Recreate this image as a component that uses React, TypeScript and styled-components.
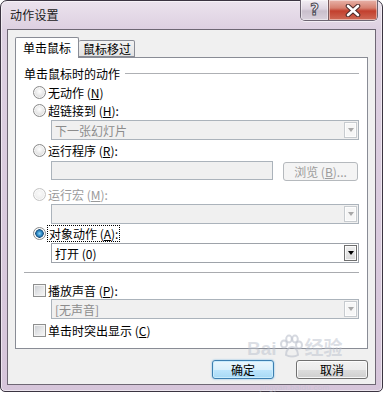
import styled, { createGlobalStyle } from "styled-components";

const GlobalStyle = createGlobalStyle`
  html, body {
    margin: 0;
    padding: 0;
    background: #ffffff;
  }
  body {
    font-family: "Noto Sans CJK SC", "Noto Sans", "DejaVu Sans", sans-serif;
    font-size: 12px;
    color: #000;
  }
`;

const Frame = styled.div`
  position: relative;
  box-sizing: border-box;
  width: 383px;
  height: 392px;
  display: flex;
  flex-direction: column;
  border: 1px solid #3b3441;
  border-radius: 7px 7px 5px 5px;
  background: linear-gradient(to bottom, #ebe3ed 0px, #ddd0e1 28px, #d6c5da 100%);
  box-shadow: inset 0 0 0 1px rgba(255, 255, 255, 0.55);
`;

const TitleBar = styled.div`
  height: 28px;
  display: flex;
  align-items: flex-start;
  justify-content: space-between;
  padding-left: 9px;
  flex-shrink: 0;
`;

const Caption = styled.span`
  line-height: 28px;
  color: #1a1a1a;
  letter-spacing: 0.2px;
`;

const CaptionButtons = styled.div`
  display: flex;
  margin-top: -1px;
  margin-right: 4px;
  border: 1px solid #6d6572;
  border-top: none;
  border-radius: 0 0 5px 5px;
  overflow: hidden;
  box-shadow: 0 1px 0 rgba(255, 255, 255, 0.6);
`;

const CaptionButton = styled.div<{ $close?: boolean }>`
  height: 20px;
  width: ${(p) => (p.$close ? "48px" : "27px")};
  display: flex;
  align-items: center;
  justify-content: center;
  background: ${(p) =>
    p.$close
      ? "linear-gradient(to bottom, #e8b3a9 0%, #d6806f 40%, #c2402e 55%, #cf6a56 100%)"
      : "linear-gradient(to bottom, #f3eef4 0%, #ddd3e0 45%, #c9bfcc 55%, #d9d1dc 100%)"};
  border-left: ${(p) => (p.$close ? "1px solid #7a5a5e" : "none")};
  box-shadow: inset 0 0 0 1px rgba(255, 255, 255, 0.45);
`;

const HelpGlyph = styled.span`
  font-family: "DejaVu Sans", sans-serif;
  font-weight: bold;
  font-size: 15px;
  color: #f4f4f6;
  -webkit-text-stroke: 1px #4d4a55;
  line-height: 1;
`;

const Client = styled.div`
  flex: 1;
  margin: 0 6px 6px;
  border: 1px solid #6e6774;
  background: #f0f0f0;
  padding: 7px 7px 0;
  display: flex;
  flex-direction: column;
`;

const TabStrip = styled.div`
  display: flex;
  align-items: flex-end;
  height: 21px;
  margin-bottom: -1px;
  position: relative;
  z-index: 1;
`;

const Tab = styled.div<{ $active?: boolean }>`
  box-sizing: border-box;
  height: ${(p) => (p.$active ? "21px" : "17px")};
  padding: ${(p) => (p.$active ? "0 7px 0 7px" : "0 3px 0 4px")};
  margin-bottom: ${(p) => (p.$active ? "0" : "1px")};
  border: 1px solid #898c95;
  border-left: ${(p) => (p.$active ? "1px solid #898c95" : "none")};
  border-bottom: ${(p) => (p.$active ? "none" : "1px solid #898c95")};
  border-radius: 2px 2px 0 0;
  background: ${(p) =>
    p.$active ? "#ffffff" : "linear-gradient(to bottom, #f3f3f3, #e2e2e2)"};
  line-height: ${(p) => (p.$active ? "20px" : "15px")};
  white-space: nowrap;
`;

const Panel = styled.div`
  box-sizing: border-box;
  height: 292px;
  border: 1px solid #898c95;
  background: #ffffff;
  padding: 0 8px;
  display: flex;
  flex-direction: column;
`;

const GroupHeader = styled.div`
  display: flex;
  align-items: center;
  gap: 5px;
  height: 16px;
  margin-top: 7px;
  white-space: nowrap;
`;

const GroupLine = styled.div`
  flex: 1;
  height: 1px;
  background: #aeb0b4;
`;

const OptionRow = styled.div<{ $top?: number; $disabled?: boolean }>`
  display: flex;
  align-items: center;
  height: 18px;
  padding-left: 9px;
  margin-top: ${(p) => p.$top ?? 0}px;
  color: ${(p) => (p.$disabled ? "#9a9a9a" : "#000")};
  white-space: nowrap;
`;

const Radio = styled.span<{ $checked?: boolean; $disabled?: boolean }>`
  box-sizing: border-box;
  width: 13px;
  height: 13px;
  margin-right: 2px;
  border-radius: 50%;
  border: 1px solid ${(p) => (p.$disabled ? "#c4c4c4" : "#8a8a8a")};
  background: ${(p) =>
    p.$checked
      ? "radial-gradient(circle at 50% 50%, #8fd3f3 0px, #2c8ac7 2.5px, #1c4f7a 4px, #ffffff 4.6px, #e6e6e6 100%)"
      : p.$disabled
      ? "radial-gradient(circle at 50% 40%, #fafafa 0px, #eeeeee 60%, #e2e2e2 100%)"
      : "radial-gradient(circle at 50% 40%, #ffffff 0px, #e4e4e4 55%, #c8c8c8 100%)"};
  box-shadow: inset 0 0 0 1px rgba(255, 255, 255, 0.7);
  flex-shrink: 0;
`;

const Check = styled.span`
  box-sizing: border-box;
  width: 13px;
  height: 13px;
  margin-right: 2px;
  border: 1px solid #8e8f8f;
  background: linear-gradient(135deg, #c9ccd1 0%, #e6e7e9 55%, #f7f7f7 100%);
  box-shadow: inset 0 0 0 1px #f4f4f4;
  flex-shrink: 0;
`;

const Key = styled.span`
  text-decoration: underline;
`;

const Focused = styled.span`
  outline: 1px dotted #000;
  outline-offset: 0px;
  padding: 0 1px;
  line-height: 15px;
`;

const Indented = styled.div<{ $top?: number }>`
  display: flex;
  gap: 10px;
  margin-left: 27px;
  margin-top: ${(p) => p.$top ?? 0}px;
`;

const Combo = styled.div<{ $enabled?: boolean }>`
  box-sizing: border-box;
  flex: 1;
  height: 20px;
  display: flex;
  align-items: center;
  justify-content: space-between;
  padding: 0 1px 0 3px;
  border: 1px solid ${(p) => (p.$enabled ? "#9ea3aa" : "#abb3bb")};
  background: ${(p) => (p.$enabled ? "#ffffff" : "#f0f0f0")};
  color: ${(p) => (p.$enabled ? "#000" : "#8c8c8c")};
  white-space: nowrap;
`;

const DropButton = styled.span<{ $enabled?: boolean }>`
  box-sizing: border-box;
  width: 13px;
  height: 16px;
  display: flex;
  align-items: center;
  justify-content: center;
  border: 1px solid ${(p) => (p.$enabled ? "#6f6f6f" : "#c7cbcf")};
  background: ${(p) =>
    p.$enabled ? "linear-gradient(to bottom, #f0f0f0, #d9d9d9)" : "#f6f6f6"};
  box-shadow: inset 0 0 0 1px rgba(255, 255, 255, 0.8);
`;

const Arrow = styled.span<{ $enabled?: boolean }>`
  width: 0;
  height: 0;
  border-left: 3.5px solid transparent;
  border-right: 3.5px solid transparent;
  border-top: 4px solid ${(p) => (p.$enabled ? "#000" : "#a8a8a8")};
`;

const TextBox = styled.div`
  box-sizing: border-box;
  width: 222px;
  height: 19px;
  border: 1px solid #abb3bb;
  background: #f0f0f0;
`;

const SmallButton = styled.div`
  box-sizing: border-box;
  width: 75px;
  height: 19px;
  margin-top: 1px;
  border: 1px solid #b5b9bd;
  border-radius: 3px;
  background: #f4f4f4;
  color: #9c9c9c;
  display: flex;
  align-items: center;
  justify-content: center;
  white-space: nowrap;
`;

const Separator = styled.div`
  height: 1px;
  margin-top: 9px;
  background: #a9abaf;
`;

const Footer = styled.div`
  display: flex;
  justify-content: flex-end;
  gap: 22px;
  margin-top: 11px;
`;

const DialogButton = styled.div<{ $default?: boolean; $width: number }>`
  box-sizing: border-box;
  width: ${(p) => p.$width}px;
  height: 19px;
  display: flex;
  align-items: center;
  justify-content: center;
  border-radius: 3px;
  border: 1px solid ${(p) => (p.$default ? "#3c7fb1" : "#707070")};
  background: ${(p) =>
    p.$default
      ? "linear-gradient(to bottom, #eaf6fd 0%, #d9f0fc 50%, #bee6fd 51%, #a7d9f5 100%)"
      : "linear-gradient(to bottom, #f2f2f2 0%, #ebebeb 50%, #dddddd 51%, #cfcfcf 100%)"};
  box-shadow: ${(p) =>
    p.$default
      ? "inset 0 0 0 1px #c9ecfd, 0 0 2px #6fb3e0"
      : "inset 0 0 0 1px rgba(255,255,255,0.8)"};
`;

/* faint "Bai 经验" watermark stamped over the bottom of the screenshot */
const Watermark = styled.div`
  position: absolute;
  left: 246px;
  top: 333px;
  display: flex;
  flex-direction: column;
  align-items: center;
  color: rgba(186, 192, 204, 0.5);
  pointer-events: none;
  font-family: "Liberation Sans", sans-serif;
`;

const WatermarkLine = styled.div`
  display: flex;
  align-items: flex-end;
  gap: 1px;
  font-size: 19px;
  font-weight: bold;
  line-height: 22px;
  font-family: "Liberation Sans", "Noto Sans CJK SC", sans-serif;
`;

const WatermarkSmall = styled.div`
  font-size: 8px;
  line-height: 9px;
  margin-top: 23px;
  letter-spacing: 0.3px;
`;

const CloseIcon = () => (
  <svg width="16" height="13" viewBox="0 0 16 13">
    <path
      d="M3 2 L13 11 M13 2 L3 11"
      stroke="#4a2a2a"
      strokeWidth="4.6"
      strokeLinecap="round"
      fill="none"
    />
    <path
      d="M3 2 L13 11 M13 2 L3 11"
      stroke="#ffffff"
      strokeWidth="2.6"
      strokeLinecap="round"
      fill="none"
    />
  </svg>
);

const Paw = () => (
  <svg width="26" height="26" viewBox="0 0 26 26">
    <g fill="none" stroke="rgba(186,192,204,0.6)" strokeWidth="2">
      <ellipse cx="6" cy="10" rx="3" ry="3.5" />
      <ellipse cx="11" cy="5" rx="2.8" ry="3.4" />
      <ellipse cx="17" cy="5" rx="2.8" ry="3.4" />
      <ellipse cx="21" cy="11" rx="3" ry="3.5" />
      <path d="M8 21 C8 15 12 13 14 13 C17 13 20 16 20 21 C17 23 11 23 8 21 Z" />
    </g>
  </svg>
);

const App = () => {
  return (
    <>
      <GlobalStyle />
      <Frame>
        <TitleBar>
          <Caption>动作设置</Caption>
          <CaptionButtons>
            <CaptionButton>
              <HelpGlyph>?</HelpGlyph>
            </CaptionButton>
            <CaptionButton $close>
              <CloseIcon />
            </CaptionButton>
          </CaptionButtons>
        </TitleBar>
        <Client>
          <TabStrip>
            <Tab $active>单击鼠标</Tab>
            <Tab>鼠标移过</Tab>
          </TabStrip>
          <Panel>
            <GroupHeader>
              单击鼠标时的动作
              <GroupLine />
            </GroupHeader>

            <OptionRow $top={2}>
              <Radio />
              无动作 (<Key>N</Key>)
            </OptionRow>
            <OptionRow>
              <Radio />
              超链接到 (<Key>H</Key>):
            </OptionRow>
            <Indented $top={1}>
              <Combo>
                下一张幻灯片
                <DropButton>
                  <Arrow />
                </DropButton>
              </Combo>
            </Indented>

            <OptionRow $top={1}>
              <Radio />
              运行程序 (<Key>R</Key>):
            </OptionRow>
            <Indented $top={2}>
              <TextBox />
              <SmallButton>
                浏览 (<Key>B</Key>)...
              </SmallButton>
            </Indented>

            <OptionRow $top={4} $disabled>
              <Radio $disabled />
              运行宏 (<Key>M</Key>):
            </OptionRow>
            <Indented $top={1}>
              <Combo>
                <span />
                <DropButton>
                  <Arrow />
                </DropButton>
              </Combo>
            </Indented>

            <OptionRow>
              <Radio $checked />
              <Focused>
                对象动作 (<Key>A</Key>):
              </Focused>
            </OptionRow>
            <Indented $top={1}>
              <Combo $enabled>
                打开 (0)
                <DropButton $enabled>
                  <Arrow $enabled />
                </DropButton>
              </Combo>
            </Indented>

            <Separator />

            <OptionRow $top={8}>
              <Check />
              播放声音 (<Key>P</Key>):
            </OptionRow>
            <Indented>
              <Combo>
                [无声音]
                <DropButton>
                  <Arrow />
                </DropButton>
              </Combo>
            </Indented>
            <OptionRow $top={2}>
              <Check />
              单击时突出显示 (<Key>C</Key>)
            </OptionRow>
          </Panel>
          <Footer>
            <DialogButton $default $width={62}>
              确定
            </DialogButton>
            <DialogButton $width={72}>取消</DialogButton>
          </Footer>
        </Client>
        <Watermark>
          <WatermarkLine>
            Bai
            <Paw />
            经验
          </WatermarkLine>
          <WatermarkSmall>jingyan.baidu.com</WatermarkSmall>
        </Watermark>
      </Frame>
    </>
  );
};

export default App;
